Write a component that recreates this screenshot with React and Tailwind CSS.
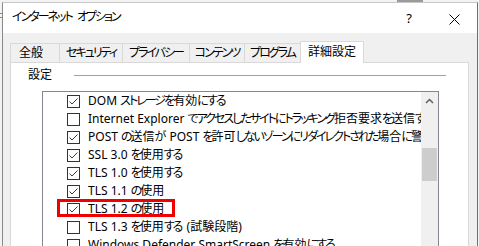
import React from 'react';

// Internet Options dialog - advanced tab
const FONT = "font-['Noto_Sans','Noto_Sans_CJK_JP',sans-serif] [font-feature-settings:'palt']";

// kana in Yu Gothic UI are narrow, so tighten kana runs only
const Jp = ({ text }) => {
    const parts = text.split(/([\u3040-\u30ff]+)/);
    return (
        <>
            {parts.map((part, i) => {
                if (!/[\u3040-\u30ff]/.test(part)) return part;
                // give back the trailing letter-spacing before a space / latin word
                const next = parts[i + 1];
                const gap = next && /^[\sA-Za-z0-9(]/.test(next);
                return (
                    <span key={i} className={gap ? 'tracking-[-2px] mr-[2px]' : 'tracking-[-2px]'}>
                        {part}
                    </span>
                );
            })}
        </>
    );
};

const tabs = [
    { label: '全般', w: 'w-[50px]' },
    { label: 'セキュリティ', w: 'w-[64px]' },
    { label: 'プライバシー', w: 'w-[68px]' },
    { label: 'コンテンツ', w: 'w-[56px]' },
    { label: 'プログラム', w: 'w-[57px]' },
];

const items = [
    { text: 'DOM ストレージを有効にする', checked: true },
    { text: 'Internet Explorer でアクセスしたサイトにトラッキング拒否要求を送信する', checked: false },
    { text: 'POST の送信が POST を許可しないゾーンにリダイレクトされた場合に警告する', checked: true },
    { text: 'SSL 3.0 を使用する', checked: true },
    { text: 'TLS 1.0 を使用する', checked: true },
    { text: 'TLS 1.1 の使用', checked: true },
    { text: 'TLS 1.2 の使用', checked: true, marked: true },
    { text: 'TLS 1.3 を使用する (試験段階)', checked: false },
    { text: 'Windows Defender SmartScreen を有効にする', checked: false },
];

const CheckBox = ({ checked }) => (
    <div className="w-[13px] h-[13px] border border-[#333333] bg-white shrink-0">
        {checked && (
            <svg width="11" height="11" viewBox="0 0 11 11">
                <path d="M1.5 5.5 L4 8 L9.5 2.5" fill="none" stroke="#3c3c3c" strokeWidth="1" />
            </svg>
        )}
    </div>
);

const App = () => {
    return (
        <div className={`relative w-[479px] h-[246px] overflow-hidden bg-[#f3f3f3] pt-[2px] pl-[2px] ${FONT}`}>
            {/* bits of the window behind */}
            <div className="absolute left-[397px] top-0 w-[26px] h-[2px] bg-[#9a9a9a]" />
            <div className="absolute left-0 top-[13px] w-[2px] h-px bg-[#8a8a8a]" />
            <div className="absolute left-0 top-[17px] w-[2px] h-px bg-[#8a8a8a]" />

            <div className="w-[476px] h-[260px] border-l border-r border-t border-l-[#8a8a8a] border-r-[#707070] border-t-[#c8c8c8] flex flex-col">
                {/* title bar */}
                <div className="h-[30px] bg-white flex items-center text-[12px] text-black shrink-0">
                    <div className="pl-[9px] flex-1 -mt-[3px] whitespace-nowrap">
                        <Jp text="インターネット オプション" />
                    </div>
                    <div className="w-[44px] text-center text-[13px] pt-[1px]">?</div>
                    <div className="w-[46px] flex justify-center pt-[2px]">
                        <svg width="11" height="11" viewBox="0 0 11 11">
                            <path d="M0.5 0.5 L10.5 10.5 M10.5 0.5 L0.5 10.5" stroke="#000" strokeWidth="1" />
                        </svg>
                    </div>
                </div>

                {/* body */}
                <div className="flex-1 bg-[#f0f0f0] pt-[8px] flex flex-col">
                    <div className="flex items-end h-[21px] pl-[7px] text-[12px] text-black">
                        {tabs.map((t, i) => (
                            <div
                                key={t.label}
                                className={`${t.w} h-[19px] ${i > 0 ? '-ml-px' : ''} border-l border-r border-t border-[#d9d9d9] bg-[#f0f0f0] flex items-center justify-center whitespace-nowrap ${i === 0 ? 'pr-[8px]' : ''}`}
                            >
                                <Jp text={t.label} />
                            </div>
                        ))}
                        <div className="relative z-10 -ml-px -mb-px w-[64px] h-[22px] border-l border-r border-t border-[#d9d9d9] bg-white flex items-center justify-center pb-[2px]">
                            詳細設定
                        </div>
                    </div>

                    {/* tab page */}
                    <div className="ml-[7px] mr-[8px] flex-1 bg-white border-l border-r border-t border-[#d9d9d9] flex flex-col">
                        <div className="mt-[4px] h-[16px] flex items-center text-[12px] text-black">
                            <div className="pl-[17px] w-[52px] whitespace-nowrap">設定</div>
                            <div className="flex-1 ml-[11px] mr-[22px] h-px bg-[#a0a0a0]" />
                        </div>

                        {/* list box */}
                        <div className="mt-[8px] ml-[31px] w-[397px] flex-1 border border-[#828790] flex">
                            <div className="w-[378px] overflow-hidden text-[12px] text-black">
                                {items.map((item) => (
                                    <div key={item.text} className="relative h-[18px] flex items-center pl-[24px] whitespace-nowrap">
                                        <CheckBox checked={item.checked} />
                                        <span className="ml-[8px]">
                                            <Jp text={item.text} />
                                        </span>
                                        {item.marked && (
                                            <div className="absolute left-[14px] top-[-1px] w-[118px] h-[18px] border-[3px] border-[#f00000]" />
                                        )}
                                    </div>
                                ))}
                            </div>
                            {/* scroll bar */}
                            <div className="w-[17px] bg-[#f0f0f0] flex flex-col">
                                <div className="h-[17px] flex items-center justify-center">
                                    <svg width="9" height="6" viewBox="0 0 9 6">
                                        <path d="M1 5 L4.5 1.5 L8 5" fill="none" stroke="#606060" strokeWidth="1.5" />
                                    </svg>
                                </div>
                                <div className="h-[39px]" />
                                <div className="h-[33px] mx-px bg-[#cdcdcd]" />
                            </div>
                        </div>
                    </div>
                </div>
            </div>
        </div>
    );
};

export default App;
